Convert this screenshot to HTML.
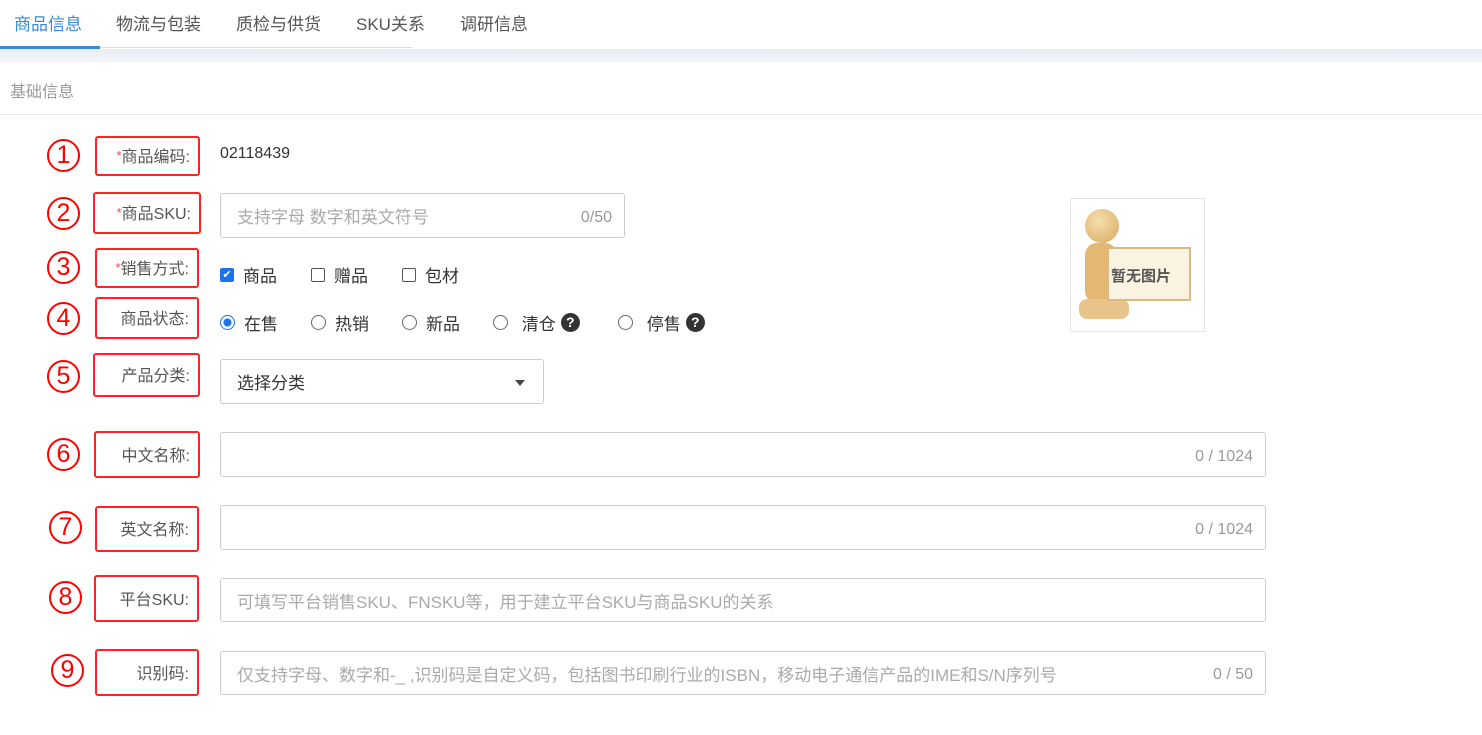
<!DOCTYPE html>
<html><head><meta charset="utf-8"><style>
*{box-sizing:border-box;margin:0;padding:0}
body{width:1482px;height:735px;background:#fff;font-family:"Liberation Sans","Noto Sans CJK SC",sans-serif;color:#333;position:relative;overflow:hidden;font-size:16px}
.a{position:absolute}
.tab{position:absolute;top:10px;font-size:17px;color:#555}
.box{position:absolute;border:2px solid #f22;border-radius:3px;font-size:16px;color:#555;display:flex;align-items:center;justify-content:flex-end;padding-right:8px;padding-bottom:2px}
.box i{color:#f44;font-style:normal;font-size:13px}
.num{position:absolute;width:33px;height:33px;border:2px solid #f00;border-radius:50%;color:#f00;font-size:25px;line-height:29px;text-align:center}
.inp{position:absolute;border:1px solid #ccc;border-radius:3px;font-size:17px;color:#aaa;padding-left:16px;display:flex;align-items:center}
.cnt{position:absolute;right:12px;top:0;bottom:0;display:flex;align-items:center;padding-top:4px;color:#999;font-size:16px}
.opt{position:absolute;font-size:17px;color:#333;display:flex;align-items:center}
.cb{width:14px;height:14px;border:1px solid #555;border-radius:2px;margin-right:9px;display:inline-block}
.rd{width:15px;height:15px;border:1px solid #666;border-radius:50%;margin-right:9px;display:inline-block}
.q{display:inline-block;width:19px;height:19px;border-radius:50%;background:#333;color:#fff;font-size:14px;font-weight:bold;text-align:center;line-height:19px;margin-left:5px}
</style></head><body>
<div class="tab" style="left:14px;color:#3a8ad6">商品信息</div>
<div class="tab" style="left:116px">物流与包装</div>
<div class="tab" style="left:236px">质检与供货</div>
<div class="tab" style="left:356px">SKU关系</div>
<div class="tab" style="left:460px">调研信息</div>
<div class="a" style="left:0;top:47px;width:413px;height:1px;background:#ddd"></div>
<div class="a" style="left:0;top:46px;width:100px;height:3px;background:#3a8ad6"></div>
<div class="a" style="left:0;top:49px;width:1482px;height:13px;background:linear-gradient(#e8ecf4,#f3f5f9)"></div>
<div class="a" style="left:10px;top:78px;font-size:16px;color:#999">基础信息</div>
<div class="a" style="left:0;top:114px;width:1482px;height:1px;background:#e8e8e8"></div>

<div class="num" style="left:47px;top:139px">1</div>
<div class="box" style="left:95px;top:136px;width:105px;height:40px"><i>*</i>商品编码:</div>
<div class="a" style="left:220px;top:145px;font-size:16px;color:#333">02118439</div>

<div class="num" style="left:47px;top:197px">2</div>
<div class="box" style="left:93px;top:192px;width:108px;height:42px"><i>*</i>商品SKU:</div>
<div class="inp" style="left:220px;top:193px;width:405px;height:45px">支持字母 数字和英文符号<span class="cnt">0/50</span></div>

<div class="num" style="left:47px;top:251px">3</div>
<div class="box" style="left:95px;top:248px;width:104px;height:40px"><i>*</i>销售方式:</div>
<div class="opt" style="left:220px;top:262px"><span class="cb" style="background:#1a73e8;border-color:#1a73e8;color:#fff;font-size:11px;line-height:12px;text-align:center">✔</span>商品</div>
<div class="opt" style="left:311px;top:262px"><span class="cb"></span>赠品</div>
<div class="opt" style="left:402px;top:262px"><span class="cb"></span>包材</div>

<div class="num" style="left:47px;top:302px">4</div>
<div class="box" style="left:95px;top:297px;width:104px;height:42px">商品状态:</div>
<div class="opt" style="left:220px;top:310px"><span class="rd" style="border-color:#1a73e8;background:radial-gradient(circle,#1a73e8 3.5px,#fff 4.5px)"></span>在售</div>
<div class="opt" style="left:311px;top:310px"><span class="rd"></span>热销</div>
<div class="opt" style="left:402px;top:310px"><span class="rd"></span>新品</div>
<div class="opt" style="left:493px;top:310px"><span class="rd"></span>&nbsp;清仓<span class="q">?</span></div>
<div class="opt" style="left:618px;top:310px"><span class="rd"></span>&nbsp;停售<span class="q">?</span></div>

<div class="num" style="left:47px;top:360px">5</div>
<div class="box" style="left:93px;top:353px;width:107px;height:44px">产品分类:</div>
<div class="inp" style="left:220px;top:359px;width:324px;height:45px;color:#333;font-size:17px">选择分类<span class="a" style="right:18px;top:20px;border:5px solid transparent;border-top:6px solid #444"></span></div>

<div class="num" style="left:47px;top:438px">6</div>
<div class="box" style="left:94px;top:431px;width:106px;height:47px">中文名称:</div>
<div class="inp" style="left:220px;top:432px;width:1046px;height:45px"><span class="cnt">0 / 1024</span></div>

<div class="num" style="left:49px;top:511px">7</div>
<div class="box" style="left:95px;top:506px;width:104px;height:46px">英文名称:</div>
<div class="inp" style="left:220px;top:505px;width:1046px;height:45px"><span class="cnt">0 / 1024</span></div>

<div class="num" style="left:49px;top:581px">8</div>
<div class="box" style="left:94px;top:575px;width:105px;height:47px">平台SKU:</div>
<div class="inp" style="left:220px;top:578px;width:1046px;height:44px">可填写平台销售SKU、FNSKU等，用于建立平台SKU与商品SKU的关系</div>

<div class="num" style="left:51px;top:654px">9</div>
<div class="box" style="left:95px;top:649px;width:104px;height:47px">识别码:</div>
<div class="inp" style="left:220px;top:651px;width:1046px;height:44px">仅支持字母、数字和-_ ,识别码是自定义码，包括图书印刷行业的ISBN，移动电子通信产品的IME和S/N序列号<span class="cnt">0 / 50</span></div>

<div class="a" style="left:1070px;top:198px;width:135px;height:134px;border:1px solid #e4e4e4;background:#fff;overflow:hidden">
<div class="a" style="left:14px;top:10px;width:34px;height:34px;border-radius:50%;background:radial-gradient(circle at 40% 35%,#f6dfb0,#d9a85c)"></div>
<div class="a" style="left:14px;top:44px;width:32px;height:60px;border-radius:12px;background:#e3b872"></div>
<div class="a" style="left:8px;top:100px;width:50px;height:20px;border-radius:8px;background:#e8c48a"></div>
<div class="a" style="left:36px;top:48px;width:84px;height:54px;background:#fbf3e2;border:2px solid #d9b985"></div>
<div class="a" style="left:40px;top:66px;font-size:15px;font-weight:bold;color:#555">暂无图片</div>
</div>
</body></html>
